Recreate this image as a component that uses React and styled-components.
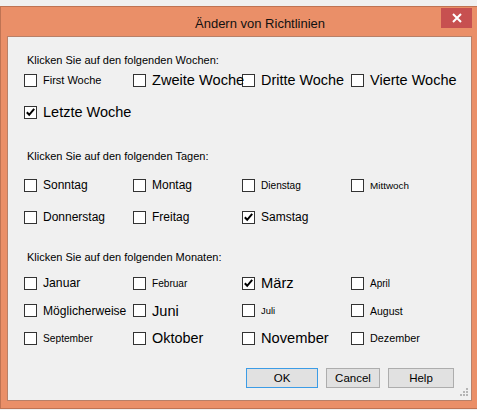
import React from "react";
import styled, { createGlobalStyle } from "styled-components";

const Global = createGlobalStyle`
  html, body {
    margin: 0;
    padding: 0;
    background: #f0f0f0;
    font-family: "Liberation Sans", Arial, sans-serif;
    overflow: hidden;
  }
`;

const Page = styled.div`
  width: 477px;
  height: 410px;
  padding-top: 6px;
  box-sizing: border-box;
`;

const Window = styled.div`
  display: flex;
  flex-direction: column;
  width: 477px;
  box-sizing: border-box;
  background: #ea8f68;
  border: 1px solid #bf7353;
  border-right: none;
  padding: 0 5px 7px 6px;
`;

const TitleBar = styled.div`
  display: flex;
  align-items: flex-start;
  height: 29px;
`;

const Title = styled.div`
  margin-left: 188px;
  padding-top: 9px;
  font-size: 13px;
  line-height: 16px;
  color: #111;
`;

const CloseButton = styled.div`
  margin-left: auto;
  margin-top: 1px;
  width: 31px;
  height: 20px;
  background: #c75050;
  display: flex;
  align-items: center;
  justify-content: center;
`;

const Content = styled.div`
  position: relative;
  height: 365px;
  box-sizing: border-box;
  background: #f0f0f0;
  border: 1px solid #b88068;
  padding: 17px 16px 0 16px;
  display: flex;
  flex-direction: column;
`;

const Label = styled.div`
  padding-left: 3px;
  font-size: 11px;
  line-height: 13px;
  color: #000;
  margin-top: ${(p) => p.$top || 0}px;
  margin-bottom: ${(p) => p.$bottom || 0}px;
`;

const Grid = styled.div`
  display: grid;
  grid-template-columns: repeat(4, 109px);
  grid-auto-rows: 20px;
  row-gap: ${(p) => p.$gap}px;
`;

const Item = styled.div`
  display: flex;
  align-items: center;
  min-width: 0;
  white-space: nowrap;
`;

const Box = styled.span`
  flex: 0 0 auto;
  width: 13px;
  height: 13px;
  box-sizing: border-box;
  border: 1px solid #333;
  background: #fff;
  display: flex;
  align-items: center;
  justify-content: center;
`;

const Text = styled.span`
  margin-left: 6px;
  font-size: ${(p) => p.$size}px;
  color: #000;
  position: relative;
`;

const Buttons = styled.div`
  display: flex;
  justify-content: flex-end;
  gap: 8px;
  margin-top: 20px;
  padding-right: 1px;
`;

const Button = styled.div`
  width: ${(p) => p.$w}px;
  height: 20px;
  box-sizing: border-box;
  background: #e1e1e1;
  border: 1px solid ${(p) => (p.$focus ? "#3c9ce6" : "#adadad")};
  display: flex;
  align-items: center;
  justify-content: center;
  font-size: 11.5px;
  color: #000;
`;

const Grip = styled.svg`
  position: absolute;
  right: 2px;
  bottom: 3px;
`;

const weeks = [
  { label: "First Woche", size: 11 },
  { label: "Zweite Woche", size: 14.6 },
  { label: "Dritte Woche", size: 14.4 },
  { label: "Vierte Woche", size: 14.5 },
  { label: "Letzte Woche", size: 14.5, checked: true },
];

const days = [
  { label: "Sonntag", size: 12 },
  { label: "Montag", size: 12 },
  { label: "Dienstag", size: 10.1 },
  { label: "Mittwoch", size: 9.9 },
  { label: "Donnerstag", size: 12 },
  { label: "Freitag", size: 12 },
  { label: "Samstag", size: 12, checked: true },
];

const months = [
  { label: "Januar", size: 12.2 },
  { label: "Februar", size: 10.1 },
  { label: "März", size: 14.7, checked: true },
  { label: "April", size: 10 },
  { label: "Möglicherweise", size: 12.1 },
  { label: "Juni", size: 14.6 },
  { label: "Juli", size: 9.4 },
  { label: "August", size: 10.5 },
  { label: "September", size: 10.2 },
  { label: "Oktober", size: 14.4 },
  { label: "November", size: 14.7 },
  { label: "Dezember", size: 10.8 },
];

function Check({ label, size, checked }) {
  return (
    <Item>
      <Box>
        {checked && (
          <svg width="11" height="11" viewBox="0 0 11 11">
            <path d="M1.8 5.2 L4.2 7.8 L9.2 1.8" fill="none" stroke="#000" strokeWidth="2" />
          </svg>
        )}
      </Box>
      <Text $size={size}>{label}</Text>
    </Item>
  );
}

export default function App() {
  return (
    <Page>
      <Global />
      <Window>
        <TitleBar>
          <Title>Ändern von Richtlinien</Title>
          <CloseButton>
            <svg width="10" height="10" viewBox="0 0 10 10">
              <path d="M1 1 L9 9 M9 1 L1 9" stroke="#fff" strokeWidth="2" />
            </svg>
          </CloseButton>
        </TitleBar>
        <Content>
          <Label $bottom={3}>Klicken Sie auf den folgenden Wochen:</Label>
          <Grid $gap={12}>
            {weeks.map((w) => (
              <Check key={w.label} {...w} />
            ))}
          </Grid>
          <Label $top={28} $bottom={12}>Klicken Sie auf den folgenden Tagen:</Label>
          <Grid $gap={12}>
            {days.map((d) => (
              <Check key={d.label} {...d} />
            ))}
          </Grid>
          <Label $top={24} $bottom={9}>Klicken Sie auf den folgenden Monaten:</Label>
          <Grid $gap={7.5}>
            {months.map((m) => (
              <Check key={m.label} {...m} />
            ))}
          </Grid>
          <Buttons>
            <Button $w={72} $focus>OK</Button>
            <Button $w={54}>Cancel</Button>
            <Button $w={66}>Help</Button>
          </Buttons>
          <Grip width="9" height="9" viewBox="0 0 9 9">
            <g fill="#b5b5b5">
              <rect x="6" y="0" width="2" height="2" />
              <rect x="3" y="3" width="2" height="2" />
              <rect x="6" y="3" width="2" height="2" />
              <rect x="0" y="6" width="2" height="2" />
              <rect x="3" y="6" width="2" height="2" />
              <rect x="6" y="6" width="2" height="2" />
            </g>
          </Grip>
        </Content>
      </Window>
    </Page>
  );
}
